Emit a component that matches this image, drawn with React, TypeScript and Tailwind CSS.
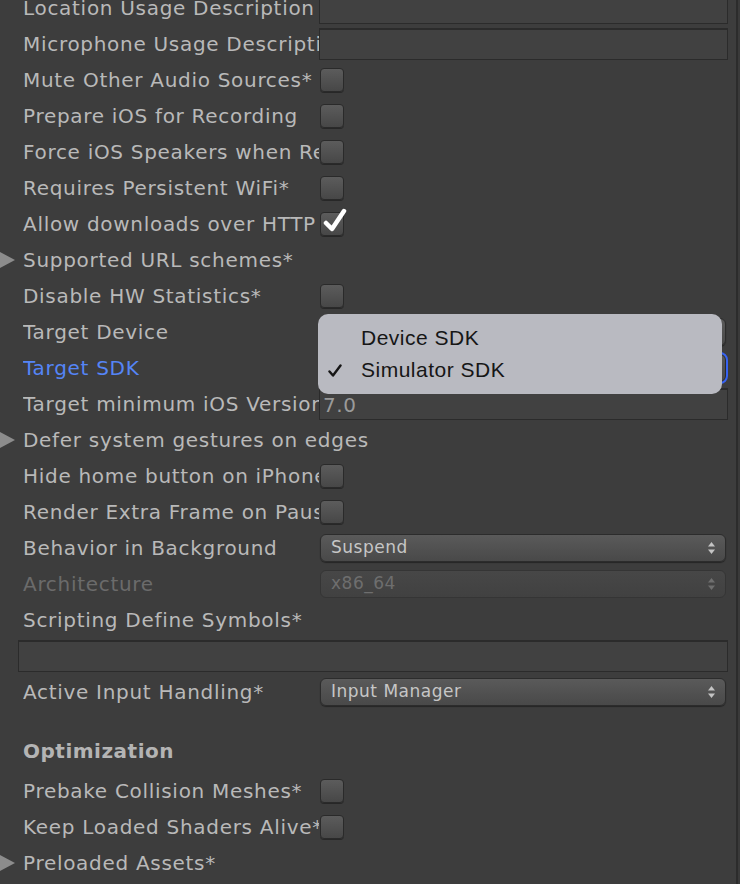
import React from "react";

type Row =
  | { kind: "text"; label: string; value?: string }
  | { kind: "check"; label: string; checked?: boolean }
  | { kind: "fold"; label: string }
  | { kind: "select"; label: string; value: string; disabled?: boolean; focus?: boolean; blue?: boolean };

const rows: Row[] = [
  { kind: "text", label: "Location Usage Description" },
  { kind: "text", label: "Microphone Usage Description" },
  { kind: "check", label: "Mute Other Audio Sources*" },
  { kind: "check", label: "Prepare iOS for Recording" },
  { kind: "check", label: "Force iOS Speakers when Recording" },
  { kind: "check", label: "Requires Persistent WiFi*" },
  { kind: "check", label: "Allow downloads over HTTP (nonsecure)*", checked: true },
  { kind: "fold", label: "Supported URL schemes*" },
  { kind: "check", label: "Disable HW Statistics*" },
  { kind: "select", label: "Target Device", value: "Universal" },
  { kind: "select", label: "Target SDK", value: "Simulator SDK", focus: true, blue: true },
  { kind: "text", label: "Target minimum iOS Version", value: "7.0" },
  { kind: "fold", label: "Defer system gestures on edges" },
  { kind: "check", label: "Hide home button on iPhone X" },
  { kind: "check", label: "Render Extra Frame on Pause" },
  { kind: "select", label: "Behavior in Background", value: "Suspend" },
  { kind: "select", label: "Architecture", value: "x86_64", disabled: true },
];

const font = { fontFamily: '"DejaVu Sans", Verdana, sans-serif' };

const Arrows = ({ dim }: { dim?: boolean }) => (
  <svg width="9" height="14" viewBox="0 0 9 14" className="shrink-0">
    <path d="M4.5 1 L8 5.5 L1 5.5 Z" fill={dim ? "#6f6f6f" : "#c4c4c4"} />
    <path d="M4.5 13 L8 8.5 L1 8.5 Z" fill={dim ? "#6f6f6f" : "#c4c4c4"} />
  </svg>
);

const Triangle = () => (
  <svg width="15" height="18" viewBox="0 0 15 18" className="absolute left-0 top-1/2 -translate-y-1/2">
    <path d="M0 1 L15 9 L0 17 Z" fill="#8c8c8c" />
  </svg>
);

const Checkbox = ({ checked }: { checked?: boolean }) => (
  <div className="relative w-[24px] h-[24px] rounded-[4px] border border-[#2a2a2a] bg-gradient-to-b from-[#5c5c5c] to-[#474747] shadow-[0_1px_0_rgba(0,0,0,0.35)]">
    {checked && (
      <svg width="26" height="26" viewBox="0 0 26 26" className="absolute left-[1px] top-[-5px]">
        <path d="M4 15 L10 21 L22 3" stroke="#ffffff" strokeWidth="4.5" fill="none" strokeLinecap="round" strokeLinejoin="round" />
      </svg>
    )}
  </div>
);

const Select = ({ value, disabled, focus }: { value: string; disabled?: boolean; focus?: boolean }) => (
  <div
    className={`flex items-center justify-between h-[28px] rounded-[6px] border pl-[10px] pr-[9px] text-[17px] tracking-[0.5px] ${
      disabled
        ? "border-[#353535] bg-gradient-to-b from-[#474747] to-[#414141] text-[#6e6e6e]"
        : "border-[#2c2c2c] bg-gradient-to-b from-[#5a5a5a] to-[#494949] text-[#c6c6c6] shadow-[0_1px_1px_rgba(0,0,0,0.4)]"
    } ${focus ? "outline outline-2 outline-[#3763f2]" : ""}`}
  >
    <span>{value}</span>
    <Arrows dim={disabled} />
  </div>
);

const TextField = ({ value }: { value?: string }) => (
  <div className="h-[32px] border border-[#2b2b2b] border-t-2 bg-[#414141] flex items-center px-[3px] text-[20px] tracking-[0.6px] text-[#9a9a9a]">
    {value}
  </div>
);

const Label = ({ children, color, free }: { children: React.ReactNode; color?: string; free?: boolean }) => (
  <div
    className={`${free ? "" : "w-[296px] shrink-0 overflow-hidden"} whitespace-nowrap text-[20px] tracking-[0.7px] ${
      color ?? "text-[#b9b9b9]"
    }`}
  >
    {children}
  </div>
);

const RowView = ({ row }: { row: Row }) => {
  const labelColor =
    row.kind === "select" && row.blue
      ? "text-[#5585f7]"
      : row.kind === "select" && row.disabled
      ? "text-[#6b6b6b]"
      : undefined;
  return (
    <div className="relative flex items-center h-[36px] pl-[23px]">
      {row.kind === "fold" && <Triangle />}
      <Label color={labelColor} free={row.kind === "fold"}>
        {row.label}
      </Label>
      {row.kind !== "fold" && (
        <div className="flex-1">
          {row.kind === "text" && <TextField value={row.value} />}
          {row.kind === "check" && (
            <div className="pl-[1px]">
              <Checkbox checked={row.checked} />
            </div>
          )}
          {row.kind === "select" && (
            <div className="pl-[1px] pr-[2px]">
              <Select value={row.value} disabled={row.disabled} focus={row.focus} />
            </div>
          )}
        </div>
      )}
    </div>
  );
};

export default function App() {
  return (
    <div className="w-[740px] h-[884px] overflow-hidden bg-[#3d3d3d] flex" style={font}>
      <div className="relative w-[736px] shrink-0 pr-[8px]">
        <div className="-mt-[10px]">
          {rows.map((r) => (
            <RowView key={r.label} row={r} />
          ))}

          <div className="flex items-center h-[36px] pl-[23px]">
            <Label free>Scripting Define Symbols*</Label>
          </div>
          <div className="h-[36px] pl-[18px] flex items-center">
            <div className="flex-1">
              <TextField />
            </div>
          </div>
          <RowView row={{ kind: "select", label: "Active Input Handling*", value: "Input Manager" }} />

          <div className="mt-[23px] h-[36px] flex items-center pl-[23px] text-[20px] font-bold text-[#b4b4b4] tracking-[0.5px]">
            Optimization
          </div>
          <div className="mt-[4px]">
            <RowView row={{ kind: "check", label: "Prebake Collision Meshes*" }} />
            <RowView row={{ kind: "check", label: "Keep Loaded Shaders Alive*" }} />
            <RowView row={{ kind: "fold", label: "Preloaded Assets*" }} />
          </div>
        </div>

        {/* popup menu for Target SDK */}
        <div
          className="absolute left-[318px] top-[314px] w-[404px] h-[80px] rounded-[10px] bg-[#b9bac1] py-[8px] text-[21px] tracking-[0.5px] text-[#161616]"
          style={{ fontFamily: '"Liberation Sans", Arial, sans-serif' }}
        >
          <div className="h-[32px] flex items-center pl-[43px]">Device SDK</div>
          <div className="relative h-[32px] flex items-center pl-[43px]">
            <svg width="14" height="14" viewBox="0 0 14 14" className="absolute left-[10px] top-[10px]">
              <path d="M1.5 7.5 L5 11.5 L12.5 1.5" stroke="#161616" strokeWidth="2.4" fill="none" strokeLinecap="round" strokeLinejoin="round" />
            </svg>
            Simulator SDK
          </div>
        </div>
      </div>
      <div className="w-[2px] bg-[#2c2c2c]" />
      <div className="flex-1 bg-[#3a3a3a]" />
    </div>
  );
}
